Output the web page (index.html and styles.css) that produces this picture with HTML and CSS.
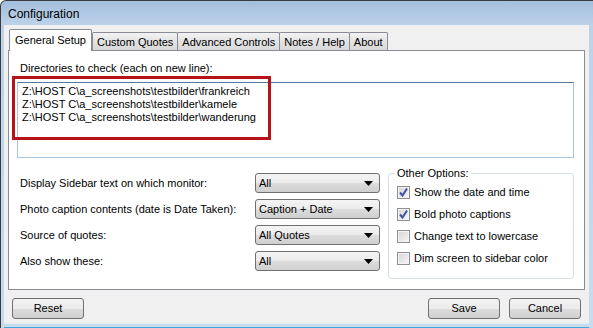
FILE: index.html
```html
<!DOCTYPE html>
<html>
<head>
    <title>Configuration</title>
    <link rel="stylesheet" href="styles.css">
</head>
<body>
    <div class="window">
        <div class="titlebar">Configuration</div>
        <div class="client">
            <div class="tabs">
                <div class="tab active">General Setup</div>
                <div class="tab">Custom Quotes</div>
                <div class="tab">Advanced Controls</div>
                <div class="tab">Notes / Help</div>
                <div class="tab">About</div>
            </div>
            <div class="panel">
                <div class="dir-label">Directories to check (each on new line):</div>
                <div class="textbox">
                    <div>Z:\HOST C\a_screenshots\testbilder\frankreich</div>
                    <div>Z:\HOST C\a_screenshots\testbilder\kamele</div>
                    <div>Z:\HOST C\a_screenshots\testbilder\wanderung</div>
                </div>
                <div class="lower">
                    <div class="settings">
                        <div class="row">
                            <span class="row-label">Display Sidebar text on which monitor:</span>
                            <div class="dropdown"><span>All</span><svg width="9" height="5" viewBox="0 0 9 5"><path d="M0 0H9L4.5 5Z" fill="#000"/></svg></div>
                        </div>
                        <div class="row">
                            <span class="row-label">Photo caption contents (date is Date Taken):</span>
                            <div class="dropdown"><span>Caption + Date</span><svg width="9" height="5" viewBox="0 0 9 5"><path d="M0 0H9L4.5 5Z" fill="#000"/></svg></div>
                        </div>
                        <div class="row">
                            <span class="row-label">Source of quotes:</span>
                            <div class="dropdown"><span>All Quotes</span><svg width="9" height="5" viewBox="0 0 9 5"><path d="M0 0H9L4.5 5Z" fill="#000"/></svg></div>
                        </div>
                        <div class="row">
                            <span class="row-label">Also show these:</span>
                            <div class="dropdown"><span>All</span><svg width="9" height="5" viewBox="0 0 9 5"><path d="M0 0H9L4.5 5Z" fill="#000"/></svg></div>
                        </div>
                    </div>
                    <fieldset class="options">
                        <legend>Other Options:</legend>
                        <div class="check-row">
                            <span class="checkbox"><svg width="11" height="11" viewBox="0 0 11 11"><path d="M2 5.5L4.5 8.5L9 1.5" fill="none" stroke="#3d54a8" stroke-width="2"/></svg></span>
                            Show the date and time
                        </div>
                        <div class="check-row">
                            <span class="checkbox"><svg width="11" height="11" viewBox="0 0 11 11"><path d="M2 5.5L4.5 8.5L9 1.5" fill="none" stroke="#3d54a8" stroke-width="2"/></svg></span>
                            Bold photo captions
                        </div>
                        <div class="check-row">
                            <span class="checkbox"></span>
                            Change text to lowercase
                        </div>
                        <div class="check-row">
                            <span class="checkbox"></span>
                            Dim screen to sidebar color
                        </div>
                    </fieldset>
                </div>
            </div>
            <div class="buttons">
                <div class="btn">Reset</div>
                <div class="btn-group">
                    <div class="btn">Save</div>
                    <div class="btn">Cancel</div>
                </div>
            </div>
        </div>
        <div class="highlight"></div>
    </div>
</body>
</html>
```

FILE: styles.css
```css
body {
    margin: 0;
    padding: 0;
    width: 593px;
    height: 328px;
    overflow: hidden;
    background-color: #ffffff;
    font-family: "Liberation Sans", Arial, sans-serif;
    font-size: 11px;
    color: #000000;
}

.window {
    position: relative;
    width: 600px;
    height: 328px;
    box-sizing: border-box;
    border: 1px solid #3b3b3b;
    border-bottom: none;
    border-radius: 6px 6px 0 0;
    background: linear-gradient(to bottom, #a3bedc 0px, #bcd2e9 24px, #c9dbee 100%);
    display: flex;
    flex-direction: column;
}

.titlebar {
    height: 24px;
    line-height: 26px;
    padding-left: 7px;
    font-size: 12px;
    color: #000000;
}

.client {
    margin: 0 10px 0 3px;
    height: 298px;
    background-color: #f0f0f0;
    border-bottom: 1px solid #e4ecf4;
    display: flex;
    flex-direction: column;
    box-shadow: 0 3px 0 #c6dbee, 0 4px 0 #3fa8d8;
}

.tabs {
    display: flex;
    align-items: flex-end;
    margin: 4px 0 0 5px;
    height: 21px;
    position: relative;
    z-index: 1;
}

.tab {
    height: 18px;
    line-height: 18px;
    box-sizing: border-box;
    padding: 0 4px;
    border: 1px solid #898c95;
    border-bottom: none;
    border-radius: 2px 2px 0 0;
    background: linear-gradient(to bottom, #f3f3f3, #e3e3e3 50%, #d8d8d8);
    margin-left: -1px;
    white-space: nowrap;
}

.tab.active {
    height: 22px;
    line-height: 20px;
    margin-bottom: -1px;
    padding: 0 5px;
    background: #ffffff;
    margin-left: 0;
    margin-right: 1px;
}

.panel {
    margin: 0 4px;
    height: 240px;
    box-sizing: border-box;
    background-color: #ffffff;
    border: 1px solid #898c95;
    padding: 10px 10px 0 8px;
}

.dir-label {
    line-height: 14px;
    margin-left: 3px;
}

.textbox {
    margin-top: 7px;
    height: 76px;
    box-sizing: border-box;
    border: 1px solid #a9c7df;
    border-top-color: #557a9c;
    padding: 2px 0 0 4px;
    line-height: 13px;
}

.lower {
    display: flex;
    align-items: flex-start;
    gap: 8px;
}

.settings {
    margin-top: 12px;
    padding-left: 3px;
}

.row {
    display: grid;
    grid-template-columns: 235px 125px;
    align-items: center;
    height: 26px;
}

.dropdown {
    height: 20px;
    box-sizing: border-box;
    border: 1px solid #707070;
    border-radius: 3px;
    background: linear-gradient(to bottom, #f4f4f4, #ebebeb 50%, #dddddd 51%, #cfcfcf);
    display: flex;
    align-items: center;
    justify-content: space-between;
    padding: 0 6px 0 3px;
}

.options {
    margin: 8px 0 0 0;
    padding: 1px 0 0 8px;
    width: 186px;
    height: 113px;
    box-sizing: border-box;
    border: 1px solid #d5dfe5;
    border-radius: 3px;
}

.options legend {
    padding: 0 2px;
    margin-left: -2px;
    line-height: 14px;
}

.check-row {
    display: flex;
    align-items: center;
    gap: 4px;
    height: 22px;
}

.checkbox {
    width: 13px;
    height: 13px;
    box-sizing: border-box;
    border: 1px solid #8f8f8f;
    background: linear-gradient(135deg, #d6d6d6, #f6f6f6);
    box-shadow: inset 0 0 0 1px #f4f4f4;
    display: flex;
    align-items: center;
    justify-content: center;
}

.buttons {
    display: flex;
    justify-content: space-between;
    padding: 8px 8px 0 8px;
}

.btn-group {
    display: flex;
    gap: 9px;
}

.btn {
    width: 72px;
    height: 21px;
    box-sizing: border-box;
    border: 1px solid #707070;
    border-radius: 3px;
    background: linear-gradient(to bottom, #f2f2f2, #ebebeb 50%, #dddddd 51%, #cfcfcf);
    text-align: center;
    line-height: 19px;
}

.highlight {
    position: absolute;
    left: 11px;
    top: 75px;
    width: 259px;
    height: 64px;
    box-sizing: border-box;
    border: 3px solid #b5121b;
}
```
